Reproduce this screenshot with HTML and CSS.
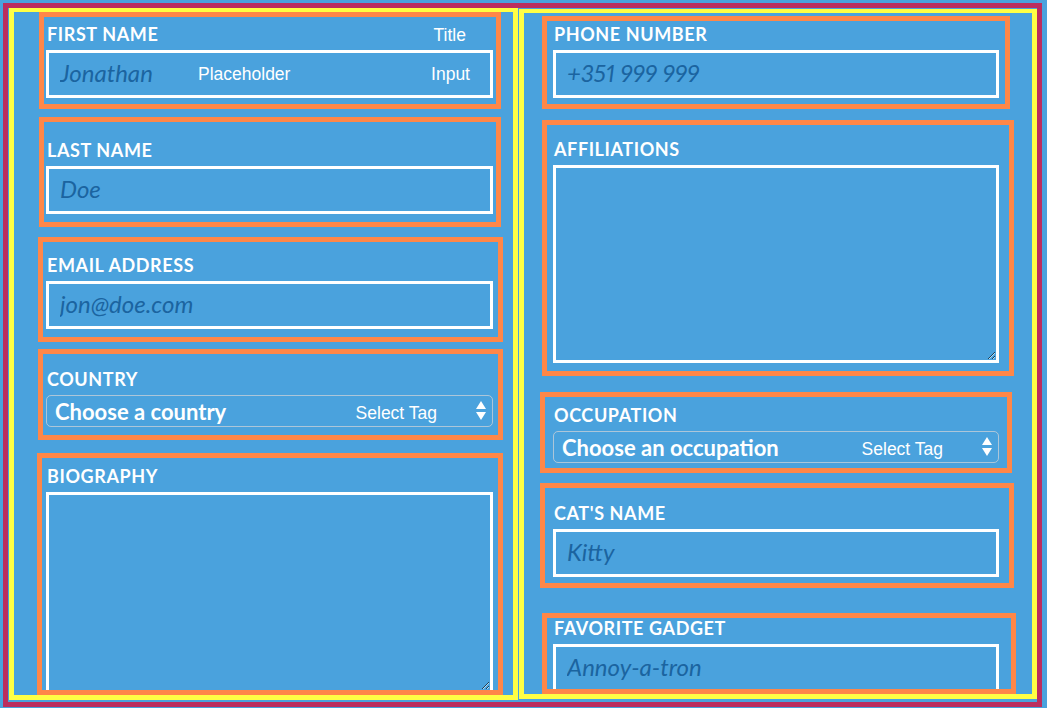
FILE: index.html
```html
<!DOCTYPE html>
<html lang="en">
<head>
    <meta charset="UTF-8">
    <meta name="viewport" content="width=device-width, initial-scale=1.0">
    <title>Profile form</title>
    <link rel="stylesheet" href="styles.css">
</head>
<body>

<form class="frame">
    <div class="column column-left">
        <div class="field field-first">
            <div class="field-head">
                <label class="field-label" for="first-name">First Name</label>
                <span class="note note-title">Title</span>
            </div>
            <div class="control">
                <input class="text-input" id="first-name" type="text" placeholder="Jonathan">
                <span class="note note-placeholder">Placeholder</span>
                <span class="note note-input">Input</span>
            </div>
        </div>

        <div class="field field-last">
            <div class="field-head">
                <label class="field-label" for="last-name">Last Name</label>
            </div>
            <input class="text-input" id="last-name" type="text" placeholder="Doe">
        </div>

        <div class="field field-email">
            <div class="field-head">
                <label class="field-label" for="email">Email Address</label>
            </div>
            <input class="text-input" id="email" type="email" placeholder="jon@doe.com">
        </div>

        <div class="field field-country">
            <div class="field-head">
                <label class="field-label" for="country">Country</label>
            </div>
            <div class="control">
                <select class="select-input" id="country">
                    <option>Choose a country</option>
                </select>
                <span class="note note-select">Select Tag</span>
                <svg class="select-arrows" width="10" height="19" viewBox="0 0 10 19">
                    <path d="M5 0 L10 8 L0 8 Z M0 11 L10 11 L5 19 Z" fill="#fff"/>
                </svg>
            </div>
        </div>

        <div class="field field-bio">
            <div class="field-head">
                <label class="field-label" for="bio">Biography</label>
            </div>
            <textarea class="area-input area-bio" id="bio"></textarea>
        </div>
    </div>

    <div class="column column-right">
        <div class="field field-phone">
            <div class="field-head">
                <label class="field-label" for="phone">Phone Number</label>
            </div>
            <input class="text-input text-input-narrow" id="phone" type="tel" placeholder="+351 999 999">
        </div>

        <div class="field field-affiliations">
            <div class="field-head">
                <label class="field-label" for="affiliations">Affiliations</label>
            </div>
            <textarea class="area-input area-affiliations" id="affiliations"></textarea>
        </div>

        <div class="field field-occupation">
            <div class="field-head">
                <label class="field-label" for="occupation">Occupation</label>
            </div>
            <div class="control control-narrow">
                <select class="select-input" id="occupation">
                    <option>Choose an occupation</option>
                </select>
                <span class="note note-select">Select Tag</span>
                <svg class="select-arrows" width="10" height="19" viewBox="0 0 10 19">
                    <path d="M5 0 L10 8 L0 8 Z M0 11 L10 11 L5 19 Z" fill="#fff"/>
                </svg>
            </div>
        </div>

        <div class="field field-cat">
            <div class="field-head">
                <label class="field-label" for="cat">Cat's Name</label>
            </div>
            <input class="text-input text-input-narrow" id="cat" type="text" placeholder="Kitty">
        </div>

        <div class="field field-gadget">
            <div class="field-head">
                <label class="field-label" for="gadget">Favorite Gadget</label>
            </div>
            <input class="text-input text-input-narrow" id="gadget" type="text" placeholder="Annoy-a-tron">
        </div>
    </div>
</form>

</body>
</html>
```

FILE: styles.css
```css
body {
    margin: 0;
    background-color: #4aa2dd;
    font-family: Lato, "Open Sans", sans-serif;
    color: #fff;
}
.frame {
    box-sizing: border-box;
    width: 1039px;
    height: 704px;
    margin: 3px;
    padding-left: 1px;
    border: 5px solid #bb2d5e; /* outer frame */
    display: flex;
    align-items: flex-start;
    gap: 1px;
}
.column {
    box-sizing: border-box;
    border: 5px solid #ffff44;
    border-top-width: 4px;
    display: flex;
    flex-direction: column;
    align-items: flex-start;
    overflow: hidden;
}
.column-left {
    width: 509px;
    height: 692px;
}
.column-right {
    width: 518px;
    height: 690px;
    margin-top: 1px;
}

/* each form row is an orange box */
.field {
    box-sizing: border-box;
    border: 5px solid #ff8748;
    flex-shrink: 0;
}
.field-head {
    display: flex;
    justify-content: space-between;
    align-items: baseline;
    height: 20px;
    margin-bottom: 6px;
}
.field-label {
    font-size: 18px;
    font-weight: 700;
    line-height: 20px;
    letter-spacing: 0.6px;
    text-transform: uppercase;
    padding-left: 1px;
}

/* left column */
.field-first {
    width: 462px;
    margin-left: 25px;
    padding: 7px 0 6px 2px;
}
.field-last {
    width: 462px;
    margin: 8px 0 0 25px;
    padding: 18px 0 8px 2px;
}
.field-email {
    width: 465px;
    margin: 10px 0 0 24px;
    padding: 13px 0 8px 3px;
}
.field-country {
    width: 465px;
    margin: 7px 0 0 24px;
    padding: 15px 0 8px 3px;
}
.field-bio {
    width: 466px;
    height: 242px;
    margin: 13px 0 0 23px;
    padding: 8px 0 0 4px;
    overflow: hidden;
}

/* right column */
.field-phone {
    width: 468px;
    margin: 3px 0 0 18px;
    padding: 3px 0 6px 6px;
}
.field-affiliations {
    width: 472px;
    margin: 11px 0 0 18px;
    padding: 14px 0 8px 6px;
}
.field-occupation {
    width: 472px;
    margin: 16px 0 0 16px;
    padding: 8px 0 5px 8px;
}
.field-cat {
    width: 474px;
    margin: 10px 0 0 16px;
    padding: 15px 0 6px 8px;
}
.field-gadget {
    width: 474px;
    height: 81px;
    margin: 25px 0 0 18px;
    padding: 0 0 0 6px;
    overflow: hidden;
}

/* inputs */
.text-input {
    display: block;
    box-sizing: border-box;
    width: 447px;
    height: 48px;
    margin: 0;
    padding: 0 0 4px 11px;
    border: 3px solid #fff;
    border-radius: 0;
    background: transparent;
    outline: none;
    font-family: Lato, sans-serif;
    font-size: 24px;
    font-style: italic;
    font-variant-numeric: proportional-nums;
    color: #fff;
}
.text-input::placeholder {
    color: #1b64a0;
    opacity: 1;
}
.text-input-narrow {
    width: 446px;
}
.area-input {
    display: block;
    box-sizing: border-box;
    margin: 0;
    border: 3px solid #fff;
    border-radius: 0;
    background: transparent;
    outline: none;
    font-family: Lato, sans-serif;
    color: #fff;
}
.area-bio {
    width: 447px;
    height: 201px;
}
.area-affiliations {
    width: 446px;
    height: 198px;
}

.control {
    position: relative;
    width: 447px;
}
.control-narrow {
    width: 446px;
}
.select-input {
    display: block;
    box-sizing: border-box;
    width: 100%;
    height: 32px;
    margin: 0;
    padding: 0 0 0 8px;
    -webkit-appearance: none;
    appearance: none;
    border: 1px solid rgba(205, 210, 215, 0.75);
    border-radius: 5px;
    background: transparent;
    font-family: Lato, sans-serif;
    font-size: 22px;
    font-weight: 700;
    color: #fff;
}
.select-arrows {
    position: absolute;
    top: 6px;
    right: 7px;
    pointer-events: none;
}

/* annotation labels laid over the form */
.note {
    font-family: "Liberation Sans", Arial, sans-serif;
    font-size: 17.5px;
    line-height: 20px;
    color: #fff;
}
.note-title {
    margin-right: 30px;
}
.note-placeholder,
.note-input,
.note-select {
    position: absolute;
    top: 0;
    bottom: 0;
    display: flex;
    align-items: center;
    pointer-events: none;
}
.note-placeholder {
    left: 152px;
}
.note-input {
    right: 23px;
}
.note-select {
    right: 56px;
    padding-top: 3px;
}
```
